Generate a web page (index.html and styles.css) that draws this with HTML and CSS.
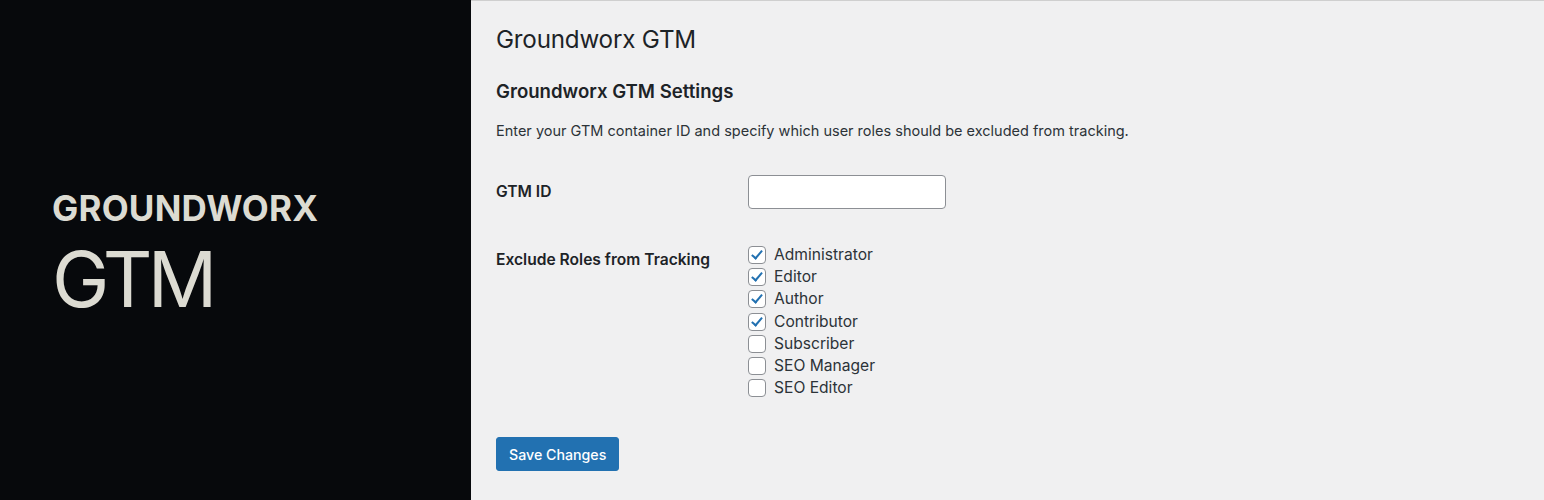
FILE: index.html
```html
<!DOCTYPE html>
<html>
<head>
  <title>Groundworx GTM</title>
  <meta name="viewport" content="width=device-width, initial-scale=1">
  <link rel="stylesheet" href="styles.css">
</head>
<body>
  <div class="banner">
    <div class="brand">
      <div class="brand-name">GROUNDWORX</div>
      <div class="brand-product">GTM</div>
    </div>

    <div class="wrap">
      <h1>Groundworx GTM</h1>
      <h2>Groundworx GTM Settings</h2>
      <p class="intro">Enter your GTM container ID and specify which user roles should be excluded from tracking.</p>

      <form class="form-table">
        <label class="field-label" for="gtm_id">GTM ID</label>
        <div class="field"><input type="text" id="gtm_id" class="text-input"></div>

        <div class="field-label roles-label">Exclude Roles from Tracking</div>
        <div class="field roles">
          <label class="role"><input type="checkbox" checked><span>Administrator</span></label>
          <label class="role"><input type="checkbox" checked><span>Editor</span></label>
          <label class="role"><input type="checkbox" checked><span>Author</span></label>
          <label class="role"><input type="checkbox" checked><span>Contributor</span></label>
          <label class="role"><input type="checkbox"><span>Subscriber</span></label>
          <label class="role"><input type="checkbox"><span>SEO Manager</span></label>
          <label class="role"><input type="checkbox"><span>SEO Editor</span></label>
        </div>
      </form>

      <button type="button" class="button-primary">Save Changes</button>
    </div>
  </div>
</body>
</html>
```

FILE: styles.css
```css
body { margin: 0; font-family: Inter, "Noto Sans", sans-serif; color: #1d2327; }
.banner { display: flex; height: 500px; overflow: hidden; }

/* dark brand panel on the left */
.brand { width: 471px; flex-shrink: 0; background: #07090c; color: #dcdbd2; display: flex; flex-direction: column; justify-content: center; padding-left: 52px; box-sizing: border-box; padding-top: 7px; }
.brand-name { font-size: 35px; font-weight: 700; letter-spacing: 0.2px; line-height: 40px; }
.brand-product { font-size: 77px; font-weight: 400; line-height: 80px; margin-top: 11px; letter-spacing: -4.5px; }

/* settings page */
.wrap { flex: 1; background: #f0f0f1; border-top: 1px solid #cfcfcf; padding: 24px 25px 0; }
h1 { font-size: 24.2px; font-weight: 400; margin: 0; line-height: 30px; letter-spacing: -0.2px; }
h2 { font-size: 18.6px; font-weight: 600; margin: 23px 0 0; line-height: 26px; }
.intro { font-size: 14.5px; margin: 17px 0 0; line-height: 20px; color: #2c3338; }

.form-table { display: grid; grid-template-columns: 252px 1fr; margin-top: 34px; }
.field-label { font-size: 15.6px; font-weight: 600; line-height: 20px; }
.field-label[for] { padding-top: 7px; }
.text-input { width: 198px; height: 34px; box-sizing: border-box; border: 1px solid #8c8f94; border-radius: 4px; background: #fff; margin: 0; }
.roles-label { margin-top: 41px; padding-top: 0; }
.roles { margin-top: 35px; display: flex; flex-direction: column; }

.role { display: flex; align-items: center; font-size: 15.6px; line-height: 22.2px; height: 22.2px; color: #2c3338; }
.role input { appearance: none; width: 18px; height: 18px; margin: 0 8px 0 0; border: 1px solid #8c8f94; border-radius: 4px; background: #fff; box-sizing: border-box; position: relative; }
.role input:checked::after { content: ""; position: absolute; left: 5px; top: 1px; width: 4px; height: 9px; border: solid #2271b1; border-width: 0 2.5px 2.5px 0; transform: rotate(40deg); }

.button-primary { margin-top: 38px; background: #2271b1; color: #fff; border: 1px solid #2271b1; border-radius: 3px; font-family: inherit; font-size: 14.2px; height: 34px; padding: 0 12px; font-weight: 500; }
```
